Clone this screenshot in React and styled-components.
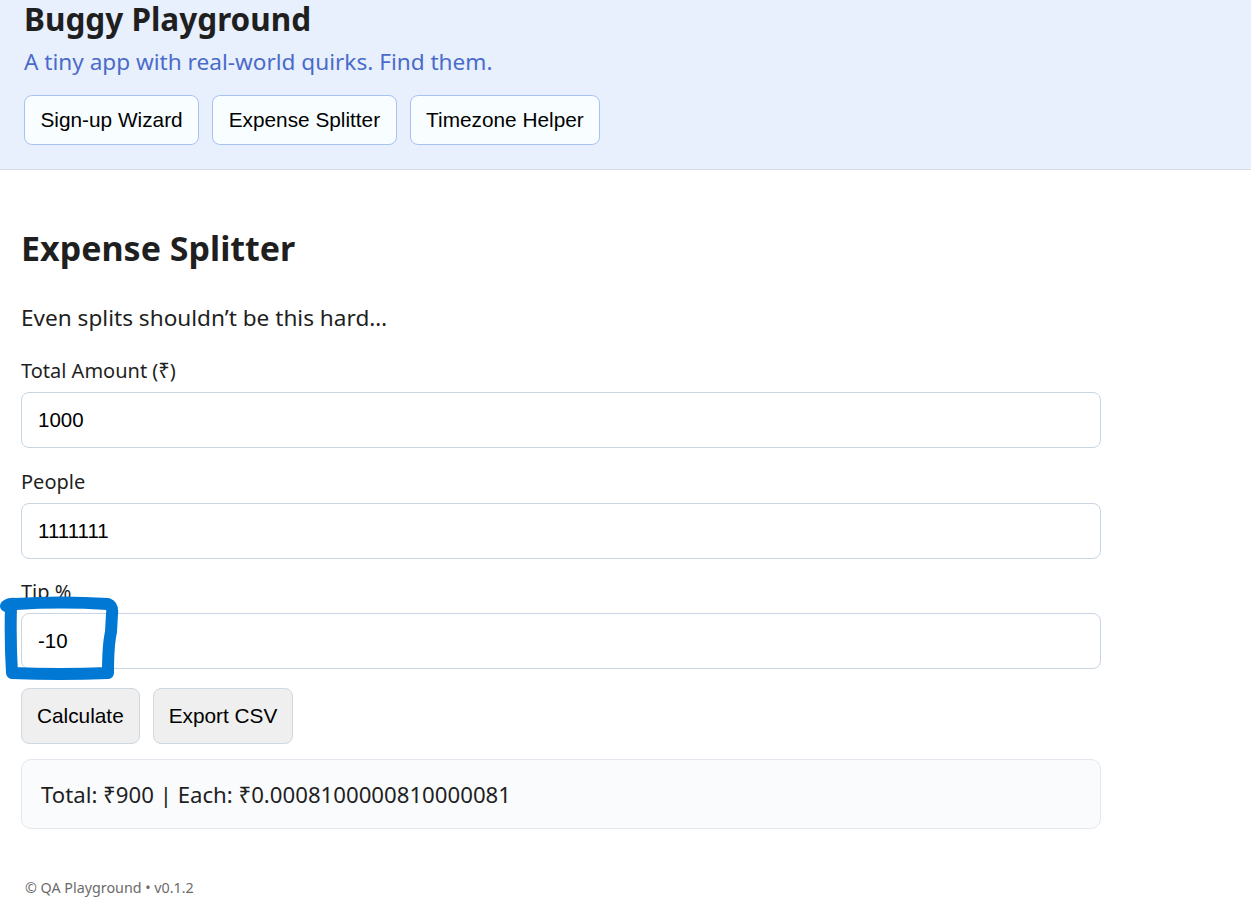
import React from "react";
import styled, { createGlobalStyle } from "styled-components";

const GlobalStyle = createGlobalStyle`
  body {
    margin: 0;
    background: #ffffff;
    color: #1f1f1f;
    font-family: "Noto Sans", "Open Sans", sans-serif;
  }
`;

const Header = styled.header`
  box-sizing: border-box;
  height: 170px;
  background: #e8f0fe;
  border-bottom: 1px solid #d6dde8;
  padding: 2px 24px 0;
`;

const Title = styled.h1`
  margin: 0;
  font-size: 31.5px;
  line-height: 34px;
  font-weight: 700;
  color: #1f1f1f;
`;

const Tagline = styled.p`
  margin: 11px 0 0;
  font-size: 22.6px;
  line-height: 30px;
  color: #4a6bc9;
`;

const Nav = styled.nav`
  display: flex;
  gap: 13px;
  margin-top: 18px;
`;

const NavButton = styled.button`
  height: 50px;
  padding: 0 15.5px;
  background: #f8feff;
  border: 1px solid #a9c1f5;
  border-radius: 8px;
  font-family: "Liberation Sans", Arial, sans-serif;
  font-size: 20.8px;
  color: #000;
`;

const Main = styled.main`
  position: relative;
  width: 1080px;
  padding: 58px 0 0 21px;
`;

const Heading = styled.h2`
  margin: 0;
  font-size: 34px;
  line-height: 40px;
  font-weight: 700;
`;

const Lead = styled.p`
  margin: 35px 0 0;
  font-size: 22.6px;
  line-height: 30px;
`;

const Field = styled.div`
  display: flex;
  flex-direction: column;
  margin-top: ${(p) => p.$top}px;
`;

const Label = styled.label`
  font-size: 20px;
  line-height: 26px;
  margin-bottom: 8px;
`;

const Input = styled.input`
  box-sizing: border-box;
  height: 56px;
  width: 100%;
  padding: 0 16px;
  border: 1px solid #c9d5e2;
  border-radius: 8px;
  font-family: "Liberation Sans", Arial, sans-serif;
  font-size: 20.5px;
  color: #000;
  background: #fff;
`;

const Actions = styled.div`
  display: flex;
  gap: 13px;
  margin-top: 19px;
`;

const ActionButton = styled.button`
  height: 56px;
  padding: 0 15px;
  background: #efefef;
  border: 1px solid #cfd7df;
  border-radius: 8px;
  font-family: "Liberation Sans", Arial, sans-serif;
  font-size: 20.8px;
  color: #000;
`;

const Result = styled.div`
  box-sizing: border-box;
  margin-top: 15px;
  height: 70px;
  display: flex;
  align-items: center;
  padding: 0 19px;
  background: #fafbfd;
  border: 1px solid #e3e7ee;
  border-radius: 10px;
  font-size: 22.2px;
`;

const Footer = styled.footer`
  padding: 49px 0 0 25px;
  font-size: 14.3px;
  line-height: 20px;
  color: #6b6b6b;
`;

const Marker = styled.svg`
  position: absolute;
  left: 0;
  top: 0;
  pointer-events: none;
`;

export default function App() {
  return (
    <>
      <GlobalStyle />
      <Header>
        <Title>Buggy Playground</Title>
        <Tagline>A tiny app with real-world quirks. Find them.</Tagline>
        <Nav>
          <NavButton type="button">Sign-up Wizard</NavButton>
          <NavButton type="button">Expense Splitter</NavButton>
          <NavButton type="button">Timezone Helper</NavButton>
        </Nav>
      </Header>
      <Main>
        <Heading>Expense Splitter</Heading>
        <Lead>Even splits shouldn’t be this hard…</Lead>
        <Field $top={25}>
          <Label>Total Amount (₹)</Label>
          <Input defaultValue="1000" />
        </Field>
        <Field $top={21}>
          <Label>People</Label>
          <Input defaultValue="1111111" />
        </Field>
        <Field $top={20}>
          <Label>Tip %</Label>
          <Input defaultValue="-10" />
        </Field>
        <Actions>
          <ActionButton type="button">Calculate</ActionButton>
          <ActionButton type="button">Export CSV</ActionButton>
        </Actions>
        <Result>Total: ₹900 | Each: ₹0.0008100000810000081</Result>
      </Main>
      <Footer>© QA Playground • v0.1.2</Footer>
      <Marker width="130" height="700" viewBox="0 0 130 700">
        <path
          d="M6 606 Q10 603 16 604 Q60 601 108 604 Q113 606 112 614 L111 632 Q108 645 108 673 Q60 675 12 673 Q10 640 11 606"
          fill="none"
          stroke="#0078d4"
          strokeWidth="12"
          strokeLinejoin="round"
          strokeLinecap="round"
        />
      </Marker>
    </>
  );
}
